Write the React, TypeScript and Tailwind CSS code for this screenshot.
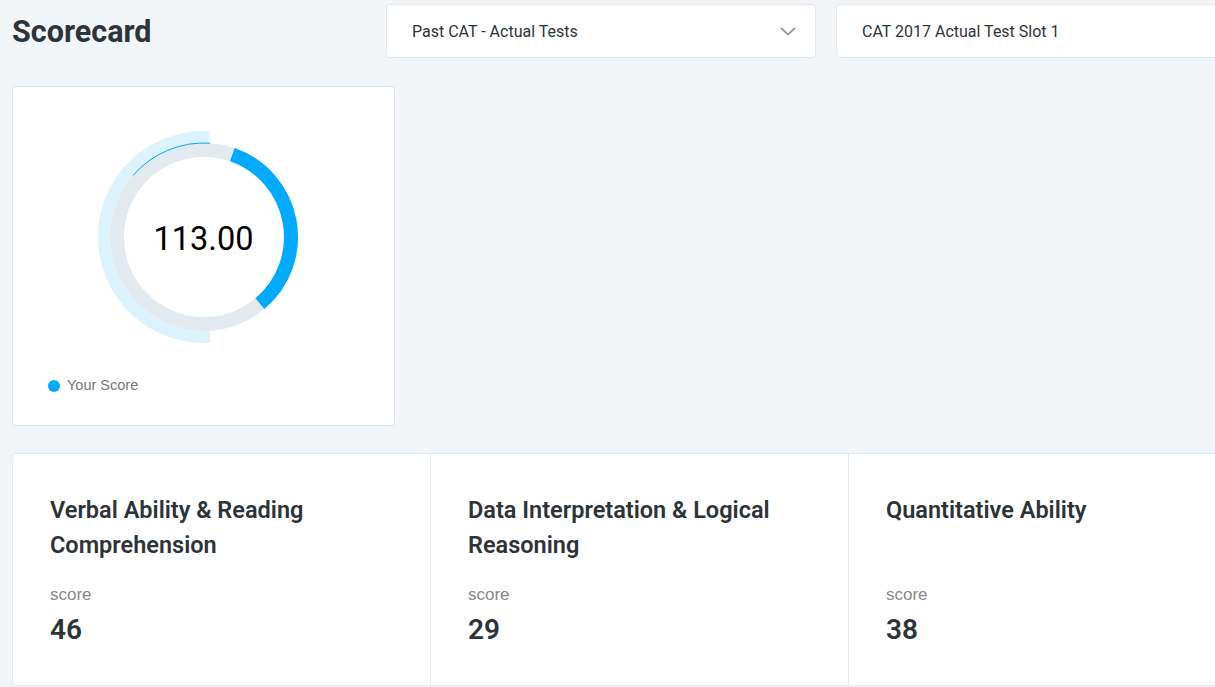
import React from "react";

const CX = 110;
const CY = 110;

function pt(a: number, r: number) {
  const rad = (a * Math.PI) / 180;
  return [CX + r * Math.sin(rad), CY - r * Math.cos(rad)];
}

function arc(a0: number, a1: number, r: number) {
  const [x0, y0] = pt(a0, r);
  const [x1, y1] = pt(a1, r);
  const large = a1 - a0 > 180 ? 1 : 0;
  return `M ${x0.toFixed(2)} ${y0.toFixed(2)} A ${r} ${r} 0 ${large} 1 ${x1.toFixed(2)} ${y1.toFixed(2)}`;
}

function Donut() {
  return (
    <svg width="220" height="220" viewBox="0 0 220 220">
      <path d={arc(176.6, 363.4, 100)} fill="none" stroke="#dcf2fd" strokeWidth="12" />
      <circle cx={CX} cy={CY} r="87" fill="none" stroke="#e3eaef" strokeWidth="14" />
      <path d={arc(19, 140, 87)} fill="none" stroke="#00aaff" strokeWidth="14" />
      <path d={arc(311, 363.6, 94)} fill="none" stroke="#00aaff" strokeWidth="1" />
    </svg>
  );
}

const sections = [
  { title: "Verbal Ability & Reading Comprehension", score: "46" },
  { title: "Data Interpretation & Logical Reasoning", score: "29" },
  { title: "Quantitative Ability", score: "38" },
];

export default function App() {
  return (
    <div className="w-[1215px] h-[687px] overflow-hidden bg-[#f1f5f8]" style={{ fontFamily: "Roboto, 'Noto Sans', sans-serif" }}>
      <div className="w-[1400px] pl-[12px]">
        <div className="flex items-start pt-[4px]">
          <h1 className="w-[374px] h-[54px] flex items-center text-[30.5px] font-bold text-[#2d3439] leading-none translate-y-[1px]">Scorecard</h1>
          <div className="w-[430px] h-[54px] bg-white border border-[#e1e7eb] rounded-[4px] flex items-center justify-between pl-[25px] pr-[19px]">
            <span className="text-[16px] text-[#2d3439] translate-y-[1px]">Past CAT - Actual Tests</span>
            <svg width="16" height="9" viewBox="0 0 16 9">
              <path d="M1 1 L8 7.5 L15 1" fill="none" stroke="#8f9ca6" strokeWidth="1.8" />
            </svg>
          </div>
          <div className="ml-[20px] w-[430px] h-[54px] bg-white border border-[#e1e7eb] rounded-[4px] flex items-center pl-[25px]">
            <span className="text-[16px] text-[#2d3439] translate-y-[1px]">CAT 2017 Actual Test Slot 1</span>
          </div>
        </div>

        <div className="mt-[28px] w-[383px] h-[340px] bg-white border border-[#dde3e7] rounded-[4px] flex flex-col">
          <div className="flex justify-center pt-[40px]">
            <div className="relative w-[220px] h-[220px]">
              <Donut />
              <div className="absolute inset-0 flex items-center justify-center text-[32.5px] text-black translate-y-[2px]">113.00</div>
            </div>
          </div>
          <div className="mt-[28px] pl-[35px] flex items-center gap-[7px]" style={{ fontFamily: "'Liberation Sans', Arial, sans-serif" }}>
            <span className="w-[12px] h-[12px] rounded-full bg-[#00aaff]" />
            <span className="text-[14.5px] text-[#777777]">Your Score</span>
          </div>
        </div>

        <div className="mt-[27px] flex bg-white border border-[#e3eaef] rounded-l-[4px] w-[1255px] h-[233px]">
          {sections.map((s, i) => (
            <div key={i} className={`${i === 0 ? "w-[417px]" : "w-[418px] border-l border-[#e3eaef]"} pl-[37px] pt-[39px]`}>
              <div className="h-[70px] w-[340px] text-[23.5px] leading-[35px] font-semibold text-[#2d3439]">{s.title}</div>
              <div className="mt-[20px] text-[17px] leading-[24px] text-[#888888]" style={{ fontFamily: "'Liberation Sans', Arial, sans-serif" }}>score</div>
              <div className="mt-[5px] text-[28px] leading-[36px] font-semibold text-[#2d3439]">{s.score}</div>
            </div>
          ))}
        </div>
      </div>
    </div>
  );
}
